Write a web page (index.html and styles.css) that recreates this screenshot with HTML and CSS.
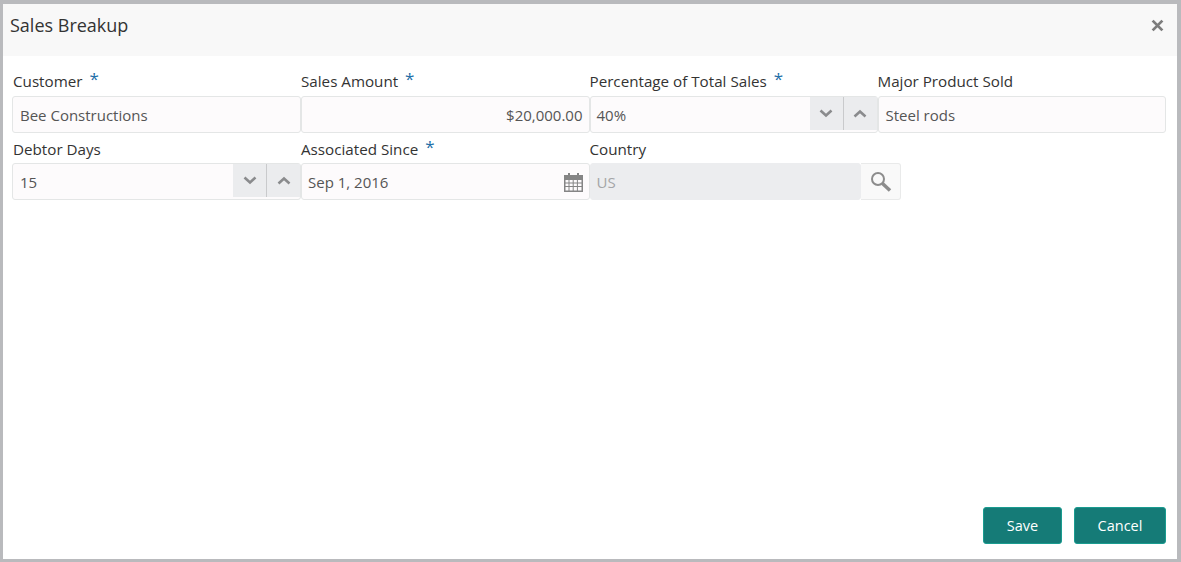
FILE: index.html
```html
<!doctype html>
<html lang="en">
<head>
  <meta charset="UTF-8">
  <meta name="viewport" content="width=device-width, initial-scale=1.0">
  <title>Sales Breakup</title>
  <link rel="stylesheet" href="styles.css">
</head>
<body>

  <div class="modal">
    <div class="modal-header">
      <h1>Sales Breakup</h1>
      <svg class="close" viewBox="0 0 12 12" aria-label="Close"><path d="M1.5 1.5l9 9M10.5 1.5l-9 9"/></svg>
    </div>

    <div class="modal-body">
      <div class="field first-row">
        <label>Customer <span class="req">*</span></label>
        <div class="input"><span class="value">Bee Constructions</span></div>
      </div>
      <div class="field first-row">
        <label>Sales Amount <span class="req">*</span></label>
        <div class="input amount"><span class="value">$20,000.00</span></div>
      </div>
      <div class="field first-row">
        <label>Percentage of Total Sales <span class="req">*</span></label>
        <div class="input tight">
          <span class="value">40%</span>
          <div class="spin">
            <svg viewBox="0 0 14 9"><path d="M1.5 1.5L7 6.5l5.500-5"/></svg>
          </div>
          <div class="spin up">
            <svg viewBox="0 0 14 9"><path d="M1.500 7.500L7 2.500l5.500 5"/></svg>
          </div>
        </div>
      </div>
      <div class="field first-row">
        <label>Major Product Sold</label>
        <div class="input"><span class="value">Steel rods</span></div>
      </div>

      <div class="field">
        <label>Debtor Days</label>
        <div class="input">
          <span class="value">15</span>
          <div class="spin">
            <svg viewBox="0 0 14 9"><path d="M1.5 1.5L7 6.5l5.500-5"/></svg>
          </div>
          <div class="spin up">
            <svg viewBox="0 0 14 9"><path d="M1.500 7.500L7 2.500l5.500 5"/></svg>
          </div>
        </div>
      </div>
      <div class="field">
        <label>Associated Since <span class="req">*</span></label>
        <div class="input tight">
          <span class="value">Sep 1, 2016</span>
          <svg class="calendar" viewBox="0 0 19 19">
            <path d="M4 0h2v3H4zM13 0h2v3h-2z"/>
            <path fill-rule="evenodd" d="M0 2h19v17H0zM1.500 7v2.500h3V7zm4 0v2.500h3.200V7zm4.200 0v2.500h3.200V7zm4.200 0v2.500h3.600V7zM1.500 10.500V13h3v-2.500zm4 0V13h3.200v-2.500zm4.200 0V13h3.200v-2.500zm4.200 0V13h3.600v-2.500zM1.500 14v3.500h3V14zm4 0v3.500h3.200V14zm4.200 0v3.500h3.200V14zm4.200 0v3.500h3.600V14z"/>
          </svg>
        </div>
      </div>
      <div class="field">
        <label>Country</label>
        <div class="lookup">
          <div class="input disabled tight"><span class="value">US</span></div>
          <button class="search">
            <svg viewBox="0 0 22 22"><circle cx="8" cy="8" r="6"/><path class="handle" d="M12.500 12.500l7.500 7"/></svg>
          </button>
        </div>
      </div>
    </div>

    <div class="modal-footer">
      <button class="btn save">Save</button>
      <button class="btn cancel">Cancel</button>
    </div>
  </div>

</body>
</html>
```

FILE: styles.css
```css
html, body {
  height: 100%;
}

body {
  margin: 0;
  box-sizing: border-box;
  padding: 4px 4px 3px 3px;
  background-color: #b9babd;
  font-family: "Open Sans", "Noto Sans", Arial, sans-serif;
  color: #333;
}

.modal {
  height: 100%;
  display: flex;
  flex-direction: column;
  background-color: white;
}

/* Header */
.modal-header {
  height: 52px;
  flex: none;
  display: flex;
  justify-content: space-between;
  padding: 9px 13px 0 7px;
  box-sizing: border-box;
  background-color: #f8f8f8;
}

.modal-header h1 {
  margin: 0;
  font-size: 18px;
  font-weight: 400;
  line-height: 25px;
}

.close {
  width: 13px;
  height: 13px;
  margin-top: 6px;
  fill: none;
  stroke: #7d7d7d;
  stroke-width: 2.600;
}

/* Form */
.modal-body {
  display: grid;
  grid-template-columns: 289px 288.500px 288px 288.500px;
  grid-auto-rows: 67px;
  padding: 10px 0 0 9px;
}

.field label {
  display: block;
  height: 30px;
  line-height: 33px;
  font-size: 15.200px;
  white-space: nowrap;
}

.field:first-child label,
.field:nth-child(5) label {
  padding-left: 1px;
}

.first-row label {
  line-height: 31px;
}

.req {
  position: relative;
  top: -2px;
  margin-left: 3px;
  font-size: 17px;
  line-height: 1;
  color: #1f6fa8;
}

.input {
  height: 37px;
  box-sizing: border-box;
  display: flex;
  align-items: center;
  padding: 1px 0 0 7px;
  border: 1px solid #e4e6e6;
  border-radius: 3px;
  background-color: #fdfbfc;
  font-size: 15px;
  color: #555;
}

.input.tight {
  padding-left: 6px;
}

.value {
  flex: 1;
}

.amount {
  padding-right: 6px;
  text-align: right;
}

.spin {
  width: 33px;
  height: 33px;
  margin-top: -1px;
  align-self: flex-start;
  display: flex;
  align-items: center;
  justify-content: center;
  background-color: #ebecee;
}

.spin.up {
  width: 34px;
  border-left: 1px solid #c9cacc;
  box-sizing: border-box;
}

.spin svg {
  width: 14px;
  height: 9px;
  fill: none;
  stroke: #8a8b8d;
  stroke-width: 2.600;
}

.calendar {
  width: 19px;
  height: 19px;
  margin-right: 6px;
  fill: #858585;
}

.lookup {
  display: flex;
  width: 311.500px;
}

.input.disabled {
  flex: 1;
  border-color: #ecedef;
  background-color: #ecedef;
  color: #a4a5a7;
}

.search {
  flex: none;
  width: 40.500px;
  height: 37px;
  padding: 0 0 0 1px;
  border: 1px solid #e9eaea;
  border-left: none;
  border-radius: 0 3px 3px 0;
  background-color: #f9f9f9;
}

.search svg {
  display: block;
  width: 22px;
  height: 22px;
  margin: auto;
  fill: none;
  stroke: #8c8c8c;
  stroke-width: 2;
}

.search .handle {
  stroke-width: 3.500;
}

/* Footer */
.modal-footer {
  margin-top: auto;
  display: flex;
  justify-content: flex-end;
  gap: 12px;
  padding: 0 11px 15px 0;
}

.btn {
  height: 37px;
  padding: 0;
  border: 1px solid #1a9c90;
  border-radius: 3px;
  background-color: #157b77;
  color: white;
  font-family: inherit;
  font-size: 14.500px;
}

.save {
  width: 79px;
}

.cancel {
  width: 92px;
}
```
